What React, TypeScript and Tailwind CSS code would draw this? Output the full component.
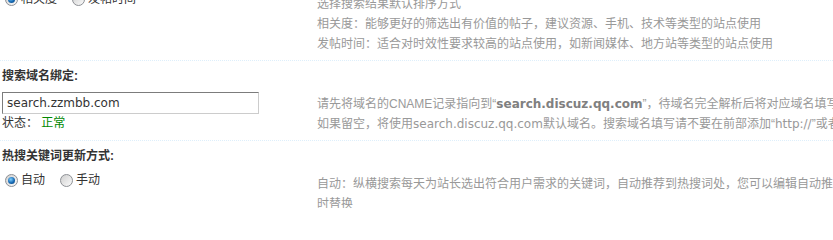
const cjk = "font-['Liberation_Sans','Noto_Sans_CJK_SC',sans-serif]"
const verdana = "font-['DejaVu_Sans','Noto_Sans_CJK_SC',sans-serif]"

function Radio({ checked }: { checked?: boolean }) {
  return (
    <span className="ml-[5px] mr-[3px] flex h-[13px] w-[13px] shrink-0 items-center justify-center rounded-full border border-[#8d9095] bg-[linear-gradient(135deg,#cfcfcf,#fbfbfb)]">
      {checked && (
        <span className="h-[7px] w-[7px] rounded-full bg-[radial-gradient(circle_at_40%_35%,#7fd0ff,#1669b3_55%,#0a3f73)]" />
      )}
    </span>
  )
}

function RadioGroup({ items, selected }: { items: string[]; selected: number }) {
  return (
    <ul className="flex">
      {items.map((label, i) => (
        <li key={label} className="flex items-center pr-[10px] text-[#333]">
          <Radio checked={i === selected} />
          {label}
        </li>
      ))}
    </ul>
  )
}

function Header({ children }: { children: React.ReactNode }) {
  return (
    <div className="border-t border-dotted border-[#deeffb] pl-[2px] pt-[6px] pb-[7px] font-bold leading-[18px] text-[#333]">
      {children}
    </div>
  )
}

export default function App() {
  return (
    <div className={`h-[208px] w-[833px] overflow-hidden bg-white text-[12px] ${cjk}`}>
      <div className="-mt-[6px] grid grid-cols-[317px_1fr] pb-[6px]">
        <div className="-mt-[4px] flex h-[18px] items-center">
          <RadioGroup items={['相关度', '发帖时间']} selected={0} />
        </div>
        <div className="whitespace-nowrap leading-[20px] text-[#999]">
          <p>选择搜索结果默认排序方式</p>
          <p>相关度：能够更好的筛选出有价值的帖子，建议资源、手机、技术等类型的站点使用</p>
          <p>发帖时间：适合对时效性要求较高的站点使用，如新闻媒体、地方站等类型的站点使用</p>
        </div>
      </div>

      <Header>搜索域名绑定:</Header>
      <div className="grid grid-cols-[317px_1fr] pb-[6px]">
        <div className="pl-[2px]">
          <input
            readOnly
            value="search.zzmbb.com"
            className={`block h-[22px] w-[257px] border border-t-[#7c7c7c] border-l-[#7c7c7c] border-r-[#cccccc] border-b-[#cccccc] bg-white px-[4px] text-[12px] text-[#333] outline-none ${verdana}`}
          />
          <p className="leading-[18px] text-[#333]">
            状态：&nbsp;<span className="text-[#008800]">正常</span>
          </p>
        </div>
        <div className="whitespace-nowrap pt-[2px] leading-[20px] text-[#999]">
          <p>
            请先将域名的CNAME记录指向到“
            <b className={`text-[#808080] ${verdana}`}>search.discuz.qq.com</b>
            ”，待域名完全解析后将对应域名填写到此处
          </p>
          <p>
            如果留空，将使用<span className={verdana}>search.discuz.qq.com</span>
            默认域名。搜索域名填写请不要在前部添加“<span className={verdana}>http://</span>”或者在末尾添加“/”
          </p>
        </div>
      </div>

      <Header>热搜关键词更新方式:</Header>
      <div className="grid grid-cols-[317px_1fr]">
        <div className="flex h-[16px] items-center">
          <RadioGroup items={['自动', '手动']} selected={0} />
        </div>
        <div className="whitespace-nowrap pt-[2px] leading-[20px] text-[#999]">
          <p>自动：纵横搜索每天为站长选出符合用户需求的关键词，自动推荐到热搜词处，您可以编辑自动推荐的热搜词，并及</p>
          <p>时替换</p>
        </div>
      </div>
    </div>
  )
}
